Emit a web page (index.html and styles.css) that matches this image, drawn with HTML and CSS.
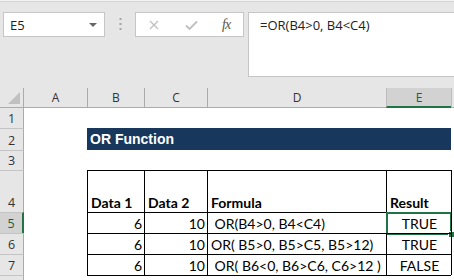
FILE: index.html
```html
<!DOCTYPE html>
<html lang="en">
<head>
    <meta charset="UTF-8">
    <title>OR Function</title>
    <link rel="stylesheet" href="styles.css">
</head>
<body>
    <div class="topline"></div>

    <!-- formula bar -->
    <div class="formula-bar">
        <div class="name-box">
            <span>E5</span>
            <span class="caret"></span>
        </div>
        <div class="grip">
            <svg width="3" height="13" viewBox="0 0 3 13"><rect x="0.5" y="0" width="2" height="2" fill="#a6a6a6"/><rect x="0.5" y="5" width="2" height="2" fill="#a6a6a6"/><rect x="0.5" y="10" width="2" height="2" fill="#a6a6a6"/></svg>
        </div>
        <div class="fx-buttons">
            <svg class="btn-x" width="10" height="10" viewBox="0 0 10 10"><path d="M1 1 L9 9 M9 1 L1 9" stroke="#bfbfbf" stroke-width="1.3" fill="none"/></svg>
            <svg class="btn-ok" width="13" height="10" viewBox="0 0 13 10"><path d="M1 5.5 L4.5 9 L12 1.5" stroke="#bfbfbf" stroke-width="1.8" fill="none"/></svg>
            <span class="fx">fx</span>
        </div>
        <div class="formula-input">=OR(B4&gt;0, B4&lt;C4)</div>
    </div>

    <!-- sheet -->
    <div class="sheet">
        <div class="hdr corner"><span class="tri"></span></div>
        <div class="hdr col">A</div>
        <div class="hdr col">B</div>
        <div class="hdr col">C</div>
        <div class="hdr col">D</div>
        <div class="hdr col active">E</div>
        <div class="hdr col"></div>

        <div class="hdr row first">1</div>
        <div class="cell"></div><div class="cell"></div><div class="cell"></div><div class="cell"></div><div class="cell"></div><div class="cell"></div>

        <div class="hdr row">2</div>
        <div class="cell"></div>
        <div class="cell title">OR Function</div>
        <div class="cell"></div>

        <div class="hdr row">3</div>
        <div class="cell"></div><div class="cell"></div><div class="cell"></div><div class="cell"></div><div class="cell"></div><div class="cell"></div>

        <div class="hdr row">4</div>
        <div class="cell"></div>
        <div class="cell tb bold">Data 1</div>
        <div class="cell tb bold">Data 2</div>
        <div class="cell tb bold">Formula</div>
        <div class="cell tb bold">Result</div>
        <div class="cell edge"></div>

        <div class="hdr row active">5</div>
        <div class="cell"></div>
        <div class="cell tb num">6</div>
        <div class="cell tb num">10</div>
        <div class="cell tb">&nbsp;OR(B4&gt;0, B4&lt;C4)</div>
        <div class="cell tb mid selected">TRUE<span class="sel"><span class="handle"></span></span></div>
        <div class="cell edge"></div>

        <div class="hdr row">6</div>
        <div class="cell"></div>
        <div class="cell tb num">6</div>
        <div class="cell tb num">10</div>
        <div class="cell tb">OR( B5&gt;0, B5&gt;C5, B5&gt;12)</div>
        <div class="cell tb mid">TRUE</div>
        <div class="cell edge"></div>

        <div class="hdr row">7</div>
        <div class="cell"></div>
        <div class="cell tb num">6</div>
        <div class="cell tb num">10</div>
        <div class="cell tb">&nbsp;OR( B6&lt;0, B6&gt;C6, C6&gt;12 )</div>
        <div class="cell tb mid">FALSE</div>
        <div class="cell edge"></div>

        <div class="hdr row"></div>
        <div class="cell"></div>
        <div class="cell foot"></div><div class="cell foot"></div><div class="cell foot"></div><div class="cell foot"></div>
        <div class="cell"></div>
    </div>
</body>
</html>
```

FILE: styles.css
```css
/* window */
body {
    margin: 0;
    background: #e6e6e6;
    font-family: "Open Sans", "Noto Sans", sans-serif;
    overflow: hidden;
}

.topline {
    height: 1px;
    background: #f2f2f2;
    border-bottom: 1px solid #d4d4d4;
}

/* formula bar */
.formula-bar {
    display: flex;
    align-items: flex-start;
    padding: 10px 0 11px 3px;
}

.name-box {
    box-sizing: border-box;
    width: 102px;
    height: 25px;
    background: white;
    border: 1px solid #c6c6c6;
    display: flex;
    align-items: center;
    justify-content: space-between;
    padding: 0 6px 0 6px;
    font-size: 13px;
    color: #222;
}

.caret {
    width: 0;
    height: 0;
    border-left: 4px solid transparent;
    border-right: 4px solid transparent;
    border-top: 4px solid #666;
    margin-right: 1px;
}

.grip {
    width: 30px;
    height: 25px;
    display: flex;
    align-items: center;
    justify-content: center;
}

.fx-buttons {
    box-sizing: border-box;
    width: 109px;
    height: 25px;
    background: white;
    border: 1px solid #c6c6c6;
    display: flex;
    align-items: center;
    padding-left: 13px;
}

.btn-ok {
    margin-left: 26px;
}

.fx {
    margin-left: 24px;
    font-family: "Liberation Serif", serif;
    font-style: italic;
    font-size: 14px;
    color: #555;
    letter-spacing: -1px;
}

.formula-input {
    flex: 1;
    box-sizing: border-box;
    height: 65px;
    margin-left: 4px;
    background: white;
    border: 1px solid #c6c6c6;
    border-right: none;
    padding: 3px 0 0 11px;
    font-size: 13px;
    color: #222;
}

/* sheet grid */
.sheet {
    display: grid;
    grid-template-columns: 24px 63px 57px 63px 179px 65px 1fr;
    grid-template-rows: 20px 20px 22px 20px 42px 21px 21px 21px 5px;
    background: white;
    overflow: hidden;
}

.hdr {
    box-sizing: border-box;
    background: #e6e6e6;
    font-size: 12px;
    color: #333;
    display: flex;
    justify-content: center;
}

.hdr.col {
    border-bottom: 1px solid #ababab;
    border-left: 1px solid #ababab;
    align-items: center;
}

.hdr.col:nth-child(2) {
    border-left: none;
}

.hdr.col.active {
    background: #d2d2d2;
    border-bottom: 2px solid #217346;
    border-left-color: #bdbdbd;
    color: #1d5e3a;
}

.hdr.col.active + .hdr.col {
    border-left-color: #bdbdbd;
}

.corner {
    border-right: 1px solid #ababab;
    border-bottom: 1px solid #ababab;
    position: relative;
}

.tri {
    position: absolute;
    right: 3px;
    bottom: 3px;
    width: 0;
    height: 0;
    border-left: 12px solid transparent;
    border-bottom: 12px solid #c0c0c0;
}

.hdr.row {
    border-top: 1px solid #c4c4c4;
    border-right: 1px solid #ababab;
    align-items: flex-end;
    padding-bottom: 1px;
    font-size: 12.5px;
}

.hdr.row.first {
    border-top: none;
}

.hdr.row.active {
    background: #d2d2d2;
    border-right: 2px solid #217346;
    color: #1d5e3a;
}

/* cells */
.cell {
    box-sizing: border-box;
    font-family: Lato, "Liberation Sans", sans-serif;
    font-size: 14px;
    color: #000;
    display: flex;
    align-items: flex-end;
    padding: 0 2px 1px 3px;
    white-space: nowrap;
    position: relative;
}

.title {
    grid-column: 3 / 7;
    background: #17375d;
    color: white;
    font-family: "Liberation Sans", Arial, sans-serif;
    font-size: 14px;
    font-weight: bold;
    align-items: center;
    padding-top: 1px;
}

.tb {
    border-left: 1px solid #000;
    border-top: 1px solid #000;
}

.edge {
    border-left: 1px solid #000;
}

.foot {
    border-top: 1px solid #000;
}

.bold {
    font-weight: bold;
}

.num {
    justify-content: flex-end;
}

.mid {
    justify-content: center;
}

.sel {
    position: absolute;
    left: -1px;
    top: -1px;
    right: -1px;
    bottom: -2px;
    border: 2px solid #217346;
}

.handle {
    position: absolute;
    right: -5px;
    bottom: -5px;
    width: 5px;
    height: 5px;
    background: #217346;
    border: 1px solid white;
}
```
